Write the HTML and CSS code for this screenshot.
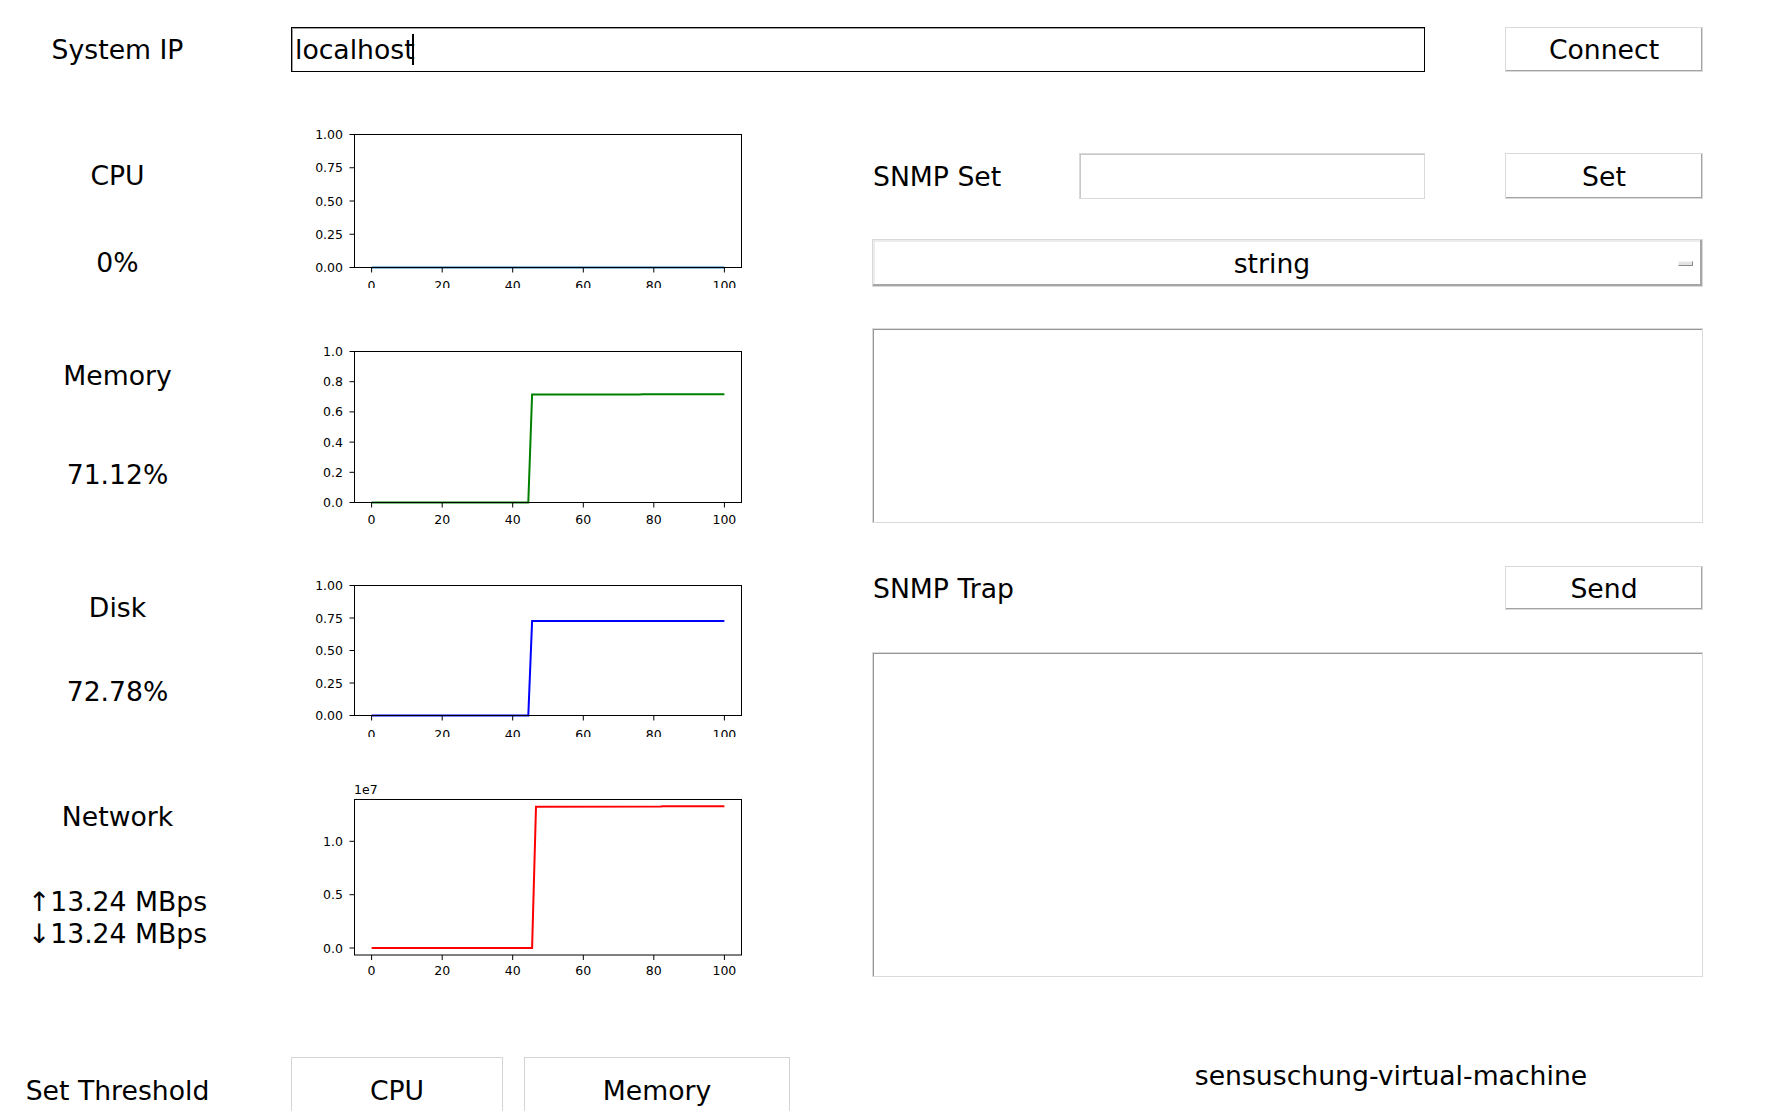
FILE: index.html
```html
<!DOCTYPE html>
<html>
<head>
<meta charset="utf-8">
<title>SNMP Monitor</title>
<link rel="stylesheet" href="styles.css">
</head>
<body>
<div class="app">
  <header class="toprow">
    <div class="cell-label">System IP</div>
    <div class="entry entry-focus"><span class="entry-text">localhost</span><span class="caret"></span></div>
    <div class="btn btn-connect">Connect</div>
  </header>

  <main class="main">
    <section class="metrics">
      <div class="metric metric-cpu">
        <div class="mlabels"><div>CPU</div><div>0%</div></div>
        <svg class="chart chart-cpu" width="460" height="178" viewBox="0 0 460 178">
          <polyline points="80.6,157.5 433.4,157.5" fill="none" stroke="#1f77b4" stroke-width="2"/>
          <rect x="63.5" y="24.5" width="387" height="133" fill="none" stroke="#000" stroke-width="1"/>
          <g stroke="#000" stroke-width="1">
            <line x1="58.5" y1="157.5" x2="63.5" y2="157.5"/>
            <line x1="58.5" y1="124.25" x2="63.5" y2="124.25"/>
            <line x1="58.5" y1="91" x2="63.5" y2="91"/>
            <line x1="58.5" y1="57.75" x2="63.5" y2="57.75"/>
            <line x1="58.5" y1="24.5" x2="63.5" y2="24.5"/>
            <line x1="80.6" y1="157.5" x2="80.6" y2="162.5"/>
            <line x1="151.2" y1="157.5" x2="151.2" y2="162.5"/>
            <line x1="221.7" y1="157.5" x2="221.7" y2="162.5"/>
            <line x1="292.3" y1="157.5" x2="292.3" y2="162.5"/>
            <line x1="362.8" y1="157.5" x2="362.8" y2="162.5"/>
            <line x1="433.4" y1="157.5" x2="433.4" y2="162.5"/>
          </g>
          <g class="ytick">
            <text x="52" y="162">0.00</text>
            <text x="52" y="128.75">0.25</text>
            <text x="52" y="95.5">0.50</text>
            <text x="52" y="62.25">0.75</text>
            <text x="52" y="29">1.00</text>
          </g>
          <g class="xtick">
            <text x="80.6" y="180">0</text>
            <text x="151.2" y="180">20</text>
            <text x="221.7" y="180">40</text>
            <text x="292.3" y="180">60</text>
            <text x="362.8" y="180">80</text>
            <text x="433.4" y="180">100</text>
          </g>
        </svg>
      </div>

      <div class="metric metric-mem">
        <div class="mlabels"><div>Memory</div><div>71.12%</div></div>
        <svg class="chart chart-mem" width="460" height="230" viewBox="0 0 460 230">
          <polyline points="80.6,202.5 237.3,202.5 241.1,94.5 348,94.5 352,94.2 433.4,94.2" fill="none" stroke="#008000" stroke-width="2"/>
          <rect x="63.5" y="51.5" width="387" height="151" fill="none" stroke="#000" stroke-width="1"/>
          <g stroke="#000" stroke-width="1">
            <line x1="58.5" y1="202.5" x2="63.5" y2="202.5"/>
            <line x1="58.5" y1="172.3" x2="63.5" y2="172.3"/>
            <line x1="58.5" y1="142.1" x2="63.5" y2="142.1"/>
            <line x1="58.5" y1="111.9" x2="63.5" y2="111.9"/>
            <line x1="58.5" y1="81.7" x2="63.5" y2="81.7"/>
            <line x1="58.5" y1="51.5" x2="63.5" y2="51.5"/>
            <line x1="80.6" y1="202.5" x2="80.6" y2="207.5"/>
            <line x1="151.2" y1="202.5" x2="151.2" y2="207.5"/>
            <line x1="221.7" y1="202.5" x2="221.7" y2="207.5"/>
            <line x1="292.3" y1="202.5" x2="292.3" y2="207.5"/>
            <line x1="362.8" y1="202.5" x2="362.8" y2="207.5"/>
            <line x1="433.4" y1="202.5" x2="433.4" y2="207.5"/>
          </g>
          <g class="ytick">
            <text x="52" y="207">0.0</text>
            <text x="52" y="176.8">0.2</text>
            <text x="52" y="146.6">0.4</text>
            <text x="52" y="116.4">0.6</text>
            <text x="52" y="86.2">0.8</text>
            <text x="52" y="56">1.0</text>
          </g>
          <g class="xtick">
            <text x="80.6" y="223.5">0</text>
            <text x="151.2" y="223.5">20</text>
            <text x="221.7" y="223.5">40</text>
            <text x="292.3" y="223.5">60</text>
            <text x="362.8" y="223.5">80</text>
            <text x="433.4" y="223.5">100</text>
          </g>
        </svg>
      </div>

      <div class="metric metric-disk">
        <div class="mlabels"><div>Disk</div><div>72.78%</div></div>
        <svg class="chart chart-disk" width="460" height="207" viewBox="0 0 460 207">
          <polyline points="80.6,185.5 237.3,185.5 241.1,90.9 433.4,90.9" fill="none" stroke="#0000ff" stroke-width="2"/>
          <rect x="63.5" y="55.5" width="387" height="130" fill="none" stroke="#000" stroke-width="1"/>
          <g stroke="#000" stroke-width="1">
            <line x1="58.5" y1="185.5" x2="63.5" y2="185.5"/>
            <line x1="58.5" y1="153" x2="63.5" y2="153"/>
            <line x1="58.5" y1="120.5" x2="63.5" y2="120.5"/>
            <line x1="58.5" y1="88" x2="63.5" y2="88"/>
            <line x1="58.5" y1="55.5" x2="63.5" y2="55.5"/>
            <line x1="80.6" y1="185.5" x2="80.6" y2="190.5"/>
            <line x1="151.2" y1="185.5" x2="151.2" y2="190.5"/>
            <line x1="221.7" y1="185.5" x2="221.7" y2="190.5"/>
            <line x1="292.3" y1="185.5" x2="292.3" y2="190.5"/>
            <line x1="362.8" y1="185.5" x2="362.8" y2="190.5"/>
            <line x1="433.4" y1="185.5" x2="433.4" y2="190.5"/>
          </g>
          <g class="ytick">
            <text x="52" y="190">0.00</text>
            <text x="52" y="157.5">0.25</text>
            <text x="52" y="125">0.50</text>
            <text x="52" y="92.5">0.75</text>
            <text x="52" y="60">1.00</text>
          </g>
          <g class="xtick">
            <text x="80.6" y="208.5">0</text>
            <text x="151.2" y="208.5">20</text>
            <text x="221.7" y="208.5">40</text>
            <text x="292.3" y="208.5">60</text>
            <text x="362.8" y="208.5">80</text>
            <text x="433.4" y="208.5">100</text>
          </g>
        </svg>
      </div>

      <div class="metric metric-net">
        <div class="mlabels"><div>Network</div><div class="netvals">↑13.24 MBps<br>↓13.24 MBps</div></div>
        <svg class="chart chart-net" width="460" height="240" viewBox="0 0 460 240">
          <polyline points="80.6,188 241.1,188 245,46.7 370,46.6 372,46.3 433.4,46.2" fill="none" stroke="#ff0000" stroke-width="2"/>
          <rect x="63.5" y="39.5" width="387" height="155.5" fill="none" stroke="#000" stroke-width="1"/>
          <g stroke="#000" stroke-width="1">
            <line x1="58.5" y1="188" x2="63.5" y2="188"/>
            <line x1="58.5" y1="134.7" x2="63.5" y2="134.7"/>
            <line x1="58.5" y1="81.3" x2="63.5" y2="81.3"/>
            <line x1="80.6" y1="195" x2="80.6" y2="200"/>
            <line x1="151.2" y1="195" x2="151.2" y2="200"/>
            <line x1="221.7" y1="195" x2="221.7" y2="200"/>
            <line x1="292.3" y1="195" x2="292.3" y2="200"/>
            <line x1="362.8" y1="195" x2="362.8" y2="200"/>
            <line x1="433.4" y1="195" x2="433.4" y2="200"/>
          </g>
          <text class="offset" x="63" y="34">1e7</text>
          <g class="ytick">
            <text x="52" y="192.5">0.0</text>
            <text x="52" y="139.2">0.5</text>
            <text x="52" y="85.8">1.0</text>
          </g>
          <g class="xtick">
            <text x="80.6" y="214.5">0</text>
            <text x="151.2" y="214.5">20</text>
            <text x="221.7" y="214.5">40</text>
            <text x="292.3" y="214.5">60</text>
            <text x="362.8" y="214.5">80</text>
            <text x="433.4" y="214.5">100</text>
          </g>
        </svg>
      </div>
    </section>

    <section class="snmp">
      <div class="set-row">
        <div class="rlabel">SNMP Set</div>
        <div class="entry entry-plain"></div>
        <div class="btn btn-set">Set</div>
      </div>
      <div class="combo">
        <div class="combo-text">string</div>
        <span class="combo-ind"></span>
      </div>
      <div class="textbox textbox-set"></div>
      <div class="trap-row">
        <div class="rlabel">SNMP Trap</div>
        <div class="btn btn-send">Send</div>
      </div>
      <div class="textbox textbox-trap"></div>
    </section>
  </main>

  <footer class="bottom">
    <div class="cell-label footer-label">Set Threshold</div>
    <div class="thr-buttons">
      <div class="btn btn-thr btn-thr-cpu">CPU</div>
      <div class="btn btn-thr btn-thr-mem">Memory</div>
    </div>
    <div class="hostname">sensuschung-virtual-machine</div>
  </footer>
</div>
</body>
</html>
```

FILE: styles.css
```css
* { box-sizing: border-box; }

html, body {
  margin: 0;
  padding: 0;
  background: #ffffff;
}

body {
  width: 1768px;
  height: 1111px;
  overflow: hidden;
  font-family: "DejaVu Sans", "Noto Sans", sans-serif;
  font-size: 26.67px;
  line-height: 31px;
  color: #000;
}

.app {
  width: 1768px;
  height: 1111px;
  display: flex;
  flex-direction: column;
}

/* ---------- top row ---------- */
.toprow {
  display: flex;
  align-items: flex-start;
  padding-top: 27px;
  height: 110px;
}

.cell-label {
  width: 235px;
  text-align: center;
}

.toprow .cell-label {
  margin-right: 56px;
  height: 45px;
  line-height: 45px;
}

.entry {
  height: 45px;
  background: #fff;
}

.entry-focus {
  width: 1134px;
  border: 1px solid #000;
  box-shadow: inset 1px 1px 0 #a0a0a0;
  display: flex;
  align-items: center;
  padding-left: 3px;
}

.caret {
  display: inline-block;
  width: 2px;
  height: 31px;
  background: #000;
  margin-left: -3px;
}

.btn {
  display: flex;
  align-items: center;
  justify-content: center;
  background: #fff;
  border: 1px solid #d9d9d9;
  box-shadow: inset -1px -1px 0 #a3a3a3;
}

.btn-connect {
  margin-left: 80px;
  width: 198px;
  height: 45px;
}

/* ---------- main ---------- */
.main {
  display: grid;
  grid-template-columns: 872px 831px;
  height: 890px;
}

.metrics {
  display: flex;
  flex-direction: column;
}

.metric {
  display: grid;
  grid-template-columns: 235px 460px;
  column-gap: 56px;
  align-items: start;
  overflow: hidden;
}

.mlabels {
  display: flex;
  flex-direction: column;
  align-items: center;
  text-align: center;
}

.metric-cpu { height: 190px; }
.metric-cpu .mlabels { padding-top: 49.5px; gap: 56px; }

.metric-mem { height: 230px; }
.metric-mem .mlabels { padding-top: 59.5px; gap: 68px; }

.metric-disk { height: 230px; }
.metric-disk .mlabels { padding-top: 61.5px; gap: 53px; }

.metric-net { height: 240px; }
.metric-net .mlabels { padding-top: 40.5px; gap: 54.5px; }

.netvals {
  line-height: 32px;
}

.chart {
  display: block;
  overflow: hidden;
}

.chart text {
  font-family: "DejaVu Sans", sans-serif;
  font-size: 12.5px;
  fill: #000;
}

.ytick text { text-anchor: end; }
.xtick text { text-anchor: middle; }
.chart .offset { text-anchor: start; }

/* ---------- snmp panel ---------- */
.snmp {
  display: flex;
  flex-direction: column;
  padding-top: 43px;
}

.set-row {
  display: flex;
  align-items: center;
  height: 46px;
}

.rlabel {
  padding-left: 1px;
  white-space: nowrap;
}

.set-row .rlabel {
  width: 207px;
}

.entry-plain {
  width: 346px;
  height: 46px;
  border: 1px solid #d9d9d9;
  box-shadow: inset 1px 1px 0 #c8c8c8;
}

.btn-set {
  margin-left: 80px;
  width: 198px;
  height: 46px;
}

.combo {
  margin-top: 40px;
  height: 48px;
  display: flex;
  align-items: center;
  border: 1px solid #d9d9d9;
  box-shadow: inset -2px -2px 0 #a6a6a6, inset 2px 2px 0 #ececec;
  background: #fff;
}

.combo-text {
  flex: 1;
  text-align: center;
}

.combo-ind {
  width: 15px;
  height: 5px;
  margin-left: 7px;
  margin-right: 9px;
  background: #e3e3e3;
  border-top: 1px solid #f4f4f4;
  border-left: 1px solid #f4f4f4;
  border-right: 1px solid #8a8a8a;
  border-bottom: 1px solid #8a8a8a;
}

.textbox {
  background: #fff;
  border: 1px solid #dadada;
  box-shadow: inset 1px 1px 0 #959595;
}

.textbox-set {
  margin-top: 41px;
  height: 195px;
}

.trap-row {
  margin-top: 43px;
  height: 44px;
  display: flex;
  align-items: center;
  justify-content: space-between;
}

.btn-send {
  width: 198px;
  height: 44px;
}

.textbox-trap {
  margin-top: 42px;
  height: 325px;
}

/* ---------- footer ---------- */
.bottom {
  display: flex;
  align-items: flex-start;
  height: 111px;
}

.footer-label {
  margin-top: 74.5px;
}

.thr-buttons {
  display: flex;
  gap: 21px;
  margin-left: 56px;
  margin-top: 57px;
}

.btn-thr {
  height: 66px;
  border: 1px solid #d4d4d4;
  box-shadow: none;
}

.btn-thr-cpu { width: 212px; }
.btn-thr-mem { width: 266px; }

.hostname {
  margin-left: 289px;
  width: 624px;
  text-align: center;
  margin-top: 59.5px;
}
```
